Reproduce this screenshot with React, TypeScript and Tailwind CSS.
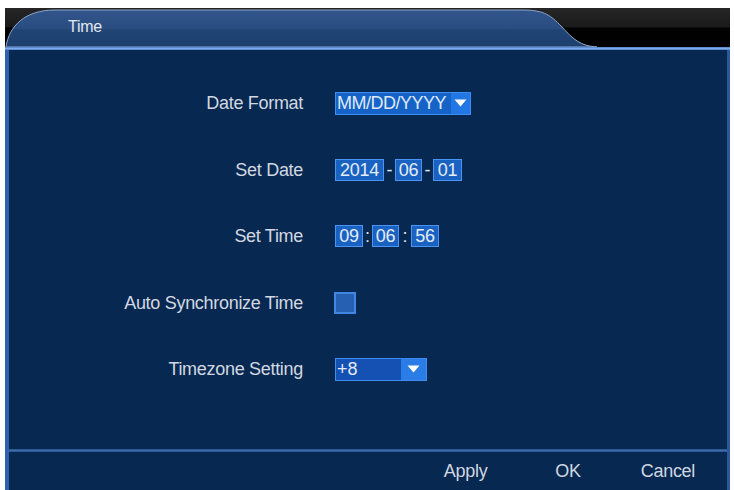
import React from "react";

const font = { fontFamily: '"Liberation Sans", Arial, sans-serif' };

function Arrow() {
  return (
    <svg width="13" height="8" viewBox="0 0 13 8">
      <path d="M0.5 0.5 L12.5 0.5 L6.5 7.5 Z" fill="#ffffff" />
    </svg>
  );
}

function Box({ w, children }: { w: string; children: React.ReactNode }) {
  return (
    <div
      className={`${w} h-[22px] flex items-center justify-center bg-[#1a62c2] border border-[#4b94f2] text-[#e4ecf6] text-[18px] leading-none tracking-[-0.3px]`}
    >
      {children}
    </div>
  );
}

function Row({ label, children }: { label: string; children: React.ReactNode }) {
  return (
    <div className="flex items-center h-[66.5px]">
      <div className="w-[294px] text-right text-[18px] text-[#d2d8e2] leading-none tracking-[-0.3px]">{label}</div>
      <div className="ml-[32px] flex items-center">{children}</div>
    </div>
  );
}

export default function App() {
  return (
    <div className="w-[734px] h-[490px] bg-white pt-[8px] pl-[5px] pr-[4px] overflow-hidden" style={font}>
      <div className="w-[725px] h-[482px] flex flex-col">
        {/* header */}
        <div className="relative h-[39px] bg-[linear-gradient(to_bottom,#262626_0%,#1a1a1a_48%,#020202_52%,#000000_100%)]">
          <svg className="absolute inset-0" width="725" height="39" viewBox="0 0 725 39">
            <defs>
              <linearGradient id="tabg" x1="0" y1="0" x2="0" y2="1">
                <stop offset="0" stopColor="#31568b" />
                <stop offset="0.5" stopColor="#2a4d80" />
                <stop offset="0.54" stopColor="#204474" />
                <stop offset="1" stopColor="#1d406f" />
              </linearGradient>
            </defs>
            <path
              d="M1 39 C 4 18, 20 2, 50 2 L 518 2 C 540 2, 546 8, 556 18 C 568 31, 575 38, 592 39 Z"
              fill="url(#tabg)"
              stroke="#8ea6ca"
              strokeWidth="1"
            />
          </svg>
          <div className="absolute left-[63px] top-[11px] text-[16px] leading-none text-[#e2e8f0] tracking-[-0.3px]">Time</div>
        </div>
        <div className="h-[3px] bg-[linear-gradient(to_bottom,#4f80c8,#7eaaf0,#4f80c8)]" />
        {/* body */}
        <div className="flex-1 flex flex-col bg-[#072850] border-l-[4px] border-r-[3px] border-l-[#2f62ad] border-r-[#2a5898]">
          <div className="flex-1 pt-[20px]">
            <Row label="Date Format">
              <div className="flex items-stretch h-[23px] w-[136px] border border-[#3f8cf0] bg-[#1663c8]">
                <div className="flex-1 flex items-center pl-[1px] text-[18px] leading-none text-[#dfe8f4] tracking-[-0.5px] overflow-hidden whitespace-nowrap">
                  MM/DD/YYYY
                </div>
                <div className="w-[19px] flex items-center justify-center bg-[#2277e4]">
                  <Arrow />
                </div>
              </div>
            </Row>
            <Row label="Set Date">
              <Box w="w-[49px]">2014</Box>
              <div className="w-[11px] text-center text-[18px] leading-none text-[#dfe8f4]">-</div>
              <Box w="w-[27px]">06</Box>
              <div className="w-[11px] text-center text-[18px] leading-none text-[#dfe8f4]">-</div>
              <Box w="w-[29px]">01</Box>
            </Row>
            <Row label="Set Time">
              <Box w="w-[28px]">09</Box>
              <div className="w-[9px] text-center text-[18px] leading-none text-[#dfe8f4]">:</div>
              <Box w="w-[27px]">06</Box>
              <div className="w-[12px] text-center text-[18px] leading-none text-[#dfe8f4]">:</div>
              <Box w="w-[28px]">56</Box>
            </Row>
            <Row label="Auto Synchronize Time">
              <div className="w-[22px] h-[22px] -ml-[1px] bg-[#2560b2] border-2 border-[#4186e2]" />
            </Row>
            <Row label="Timezone Setting">
              <div className="flex items-stretch h-[23px] w-[92px] border border-[#3f8cf0]">
                <div className="flex-1 flex items-center pl-[1px] bg-[#1551b2] text-[18px] leading-none text-[#e2eaf6]">
                  +8
                </div>
                <div className="w-[25px] flex items-center justify-center bg-[#2a7ce6]">
                  <Arrow />
                </div>
              </div>
            </Row>
          </div>
          <div className="h-[3px] bg-[linear-gradient(to_bottom,#244f88,#3a6cae,#244f88)]" />
          <div className="h-[38px] flex items-center justify-end pr-[32px] text-[18px] leading-none text-[#d0d7e2] tracking-[-0.3px]">
            <span>Apply</span>
            <span className="ml-[68px]">OK</span>
            <span className="ml-[60px]">Cancel</span>
          </div>
        </div>
      </div>
    </div>
  );
}
